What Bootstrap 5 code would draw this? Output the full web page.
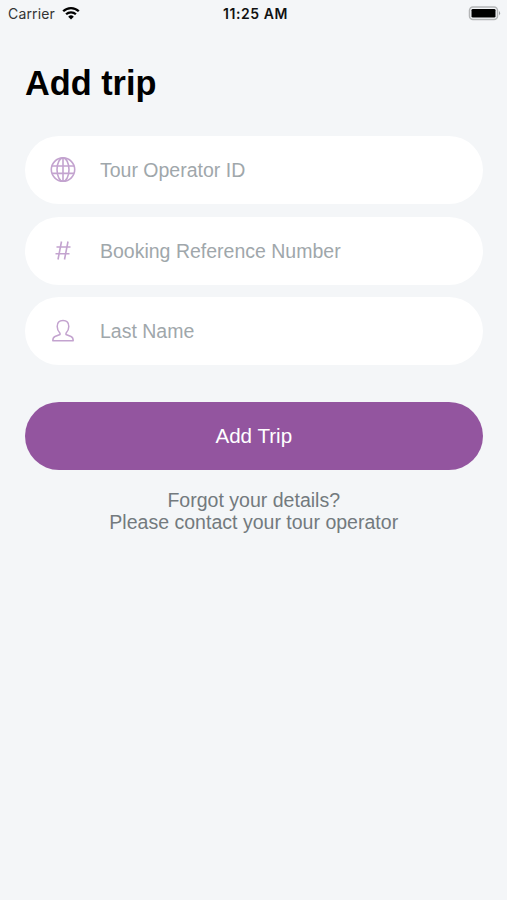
<!DOCTYPE html>
<html lang="en">
<head>
<meta charset="utf-8">
<meta name="viewport" content="width=device-width, initial-scale=1">
<title>Add trip</title>
<link rel="stylesheet" href="https://cdn.jsdelivr.net/npm/bootstrap@5.3.0/dist/css/bootstrap.min.css">
<style>
  body { background: #f4f6f8; font-family: "Liberation Sans", Arial, sans-serif; color: #000; }
  .status-bar { height: 28px; padding: 0 6px 0 8px; font-family: Inter, sans-serif; font-size: 14px; line-height: 28px; }
  .status-bar svg, .trip-field svg { display: block; }
  .status-carrier { color: #333; letter-spacing: .15px; }
  .status-wifi { margin-left: 7px; margin-bottom: 2px; }
  .status-battery { margin-bottom: 1px; }
  .status-time { color: #111; font-weight: 600; letter-spacing: .55px; padding-left: 2px; }
  .trip-screen { padding: 34px 24.5px 0 25px; }
  .trip-title { font-size: 34.3px; line-height: 42px; margin-bottom: 32.3px; }
  .trip-form { gap: 12.4px; }
  .trip-field { height: 68px; background: #fff; padding-left: 24px; padding-right: 24px; }
  .trip-icon { width: 27px; margin-right: 24px; color: #c3a3cf; }
  .trip-field .form-control { font-size: 19.5px; line-height: 24px; }
  .trip-field .form-control::placeholder { color: #9fa7ab; opacity: 1; }
  .trip-submit { height: 68px; margin-top: 24.5px; background: #93559f; color: #fff; font-size: 20.6px; }
  .trip-submit:hover, .trip-submit:focus { background: #824a8d; color: #fff; }
  .trip-help { margin-top: 19px; color: #737a7e; font-size: 19.55px; line-height: 22px; }
</style>
</head>
<body>
<header class="status-bar d-flex align-items-center">
  <div class="col d-flex align-items-center">
    <span class="status-carrier">Carrier</span>
    <svg class="status-wifi" width="18" height="14" viewBox="0 0 18 14" fill="none" stroke="#000" stroke-width="2.3" aria-label="Wi-Fi">
      <path d="M1.2 5.3a11 11 0 0 1 15.6 0M4.1 8.3a7 7 0 0 1 9.8 0"/>
      <path d="M6.2 10.7a4 4 0 0 1 5.6 0L9 13.5z" fill="#000" stroke="none"/>
    </svg>
  </div>
  <span class="status-time">11:25 AM</span>
  <div class="col d-flex justify-content-end">
    <svg class="status-battery" width="33" height="15" viewBox="0 0 33 15" aria-label="Battery full">
      <rect x="1.5" y="1" width="28" height="12.5" rx="3.5" fill="none" stroke="#b3b5b6" stroke-width="1.5"/>
      <rect x="3.5" y="3" width="24" height="8.5" rx="1.3"/>
      <path d="M31 5q2.2 2.2 0 4.4z" fill="#9b9d9f"/>
    </svg>
  </div>
</header>
<main class="trip-screen">
  <h1 class="trip-title fw-bold">Add trip</h1>
  <form class="trip-form d-flex flex-column">
    <label class="trip-field d-flex align-items-center rounded-pill">
      <span class="trip-icon flex-shrink-0 d-flex justify-content-center">
        <svg width="26" height="26" viewBox="0 0 26 26" fill="none" stroke="currentColor" stroke-width="1.6">
          <circle cx="13" cy="12.6" r="11.7"/><ellipse cx="13" cy="12.6" rx="6" ry="11.7"/>
          <path d="M13 1v23.3M2 9h22M2 16.4h22"/>
        </svg>
      </span>
      <input class="form-control border-0 bg-transparent shadow-none p-0" placeholder="Tour Operator ID" aria-label="Tour Operator ID">
    </label>
    <label class="trip-field d-flex align-items-center rounded-pill">
      <span class="trip-icon flex-shrink-0 d-flex justify-content-center">
        <svg width="18" height="20" viewBox="0 0 18 20" fill="none" stroke="currentColor" stroke-width="1.6">
          <path d="M7.5.5 4 18.5M14 .5l-3.5 18M2.5 6h14M1.5 12.8h14"/>
        </svg>
      </span>
      <input class="form-control border-0 bg-transparent shadow-none p-0" placeholder="Booking Reference Number" aria-label="Booking Reference Number">
    </label>
    <label class="trip-field d-flex align-items-center rounded-pill">
      <span class="trip-icon flex-shrink-0 d-flex justify-content-center">
        <svg width="24" height="24" viewBox="0 0 24 24" fill="none" stroke="currentColor" stroke-width="1.5" stroke-linejoin="round">
          <path d="M9 14.3C7.3 12.5 6.2 10 6.2 7.4C6.2 3.8 8.5 1.5 12 1.5S17.8 3.8 17.8 7.4C17.8 10 16.7 12.5 15 14.3V15.5L20 17.5Q22.2 18.5 22.2 21.8H1.8Q1.8 18.5 4 17.5L9 15.5z"/>
        </svg>
      </span>
      <input class="form-control border-0 bg-transparent shadow-none p-0" placeholder="Last Name" aria-label="Last Name">
    </label>
    <button type="button" class="trip-submit btn border-0 rounded-pill w-100 p-0">Add Trip</button>
  </form>
  <p class="trip-help text-center mb-0">Forgot your details?<br>Please contact your tour operator</p>
</main>
<script src="https://cdn.jsdelivr.net/npm/bootstrap@5.3.0/dist/js/bootstrap.bundle.min.js"></script>
</body>
</html>
